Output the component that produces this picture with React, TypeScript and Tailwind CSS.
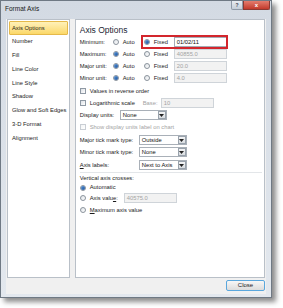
function Radio({ on }: { on?: boolean }) {
  return (
    <span className="flex h-[6px] w-[6px] shrink-0 items-center justify-center rounded-full border border-[#8a939c] bg-gradient-to-br from-[#dfe3e8] to-white">
      {on && <span className="h-[4px] w-[4px] rounded-full bg-gradient-to-br from-[#5b95d6] to-[#17509a]" />}
    </span>
  );
}

function Check({ off }: { off?: boolean }) {
  return (
    <span
      className={`h-[6px] w-[6px] shrink-0 border bg-gradient-to-br to-white ${
        off ? "border-[#c9ced4] from-[#f3f4f5]" : "border-[#8f99a4] from-[#dde1e6]"
      }`}
    />
  );
}

function Box({ value, className, on }: { value: string; className: string; on?: boolean }) {
  return (
    <span
      className={`flex h-[10px] items-center border pl-[2px] ${
        on ? "border-[#a5acb5] bg-white text-[#111]" : "border-[#cfd4d9] bg-[#f2f2f2] text-[#a3a3a3]"
      } ${className}`}
    >
      {value}
    </span>
  );
}

function Select({ value, className }: { value: string; className: string }) {
  return (
    <span className={`flex h-[10px] items-center border border-[#a9b0b8] bg-white ${className}`}>
      <span className="flex-1 pl-[2px] text-[#111]">{value}</span>
      <span className="flex h-[8px] w-[8px] items-center justify-center border border-[#9aa3ad] bg-gradient-to-b from-[#f4f5f6] to-[#d9dde1]">
        <svg width="5" height="3" viewBox="0 0 5 3">
          <polygon points="0,0 5,0 2.5,3" fill="#222" />
        </svg>
      </span>
    </span>
  );
}

const sideItems = [
  "Axis Options",
  "Number",
  "Fill",
  "Line Color",
  "Line Style",
  "Shadow",
  "Glow and Soft Edges",
  "3-D Format",
  "Alignment",
];

const unitRows = [
  { label: "Minimum:", auto: false, value: "01/02/11" },
  { label: "Maximum:", auto: true, value: "40855.0" },
  { label: "Major unit:", auto: true, value: "20.0" },
  { label: "Minor unit:", auto: true, value: "4.0" },
];

export default function App() {
  return (
    <div className="h-[308px] w-[283px] bg-white font-['Liberation_Sans',Arial,sans-serif] text-[5.8px] text-[#1b1b1b]">
      <div className="flex h-[298px] w-[272px] flex-col border border-[#6f7984] bg-gradient-to-b from-[#d3dae3] to-[#e3e8ee] shadow-[4px_4px_5px_rgba(0,0,0,0.45)]">
        {/* Title bar */}
        <div className="flex h-[18px] items-start">
          <span className="mt-[2px] flex-1 pl-[4px] text-[6.5px] leading-[12px] text-[#1a1a1a]">Format Axis</span>
          <span className="flex h-[9px] w-[12px] items-center justify-center rounded-bl-[2px] border border-t-0 border-[#8e99a6] bg-gradient-to-b from-[#e8edf2] to-[#c5ced8] text-[5px] font-bold leading-none text-[#3b4450]">
            ?
          </span>
          <span className="mr-[1px] flex h-[9px] w-[27px] items-center justify-center rounded-br-[2px] border border-t-0 border-[#8a3a33] bg-gradient-to-b from-[#e47c6e] to-[#c2392b] text-[6px] font-bold leading-none text-white">
            x
          </span>
        </div>

        {/* Client area */}
        <div className="mx-[5px] flex flex-1 flex-col bg-[#f0f0f0] px-[1px]">
          <div className="flex h-[259px] gap-[5px]">
            {/* Left list */}
            <div className="w-[63px] border border-[#b9c0c8] bg-white px-[1px] pt-[1px]">
              {sideItems.map((s, i) => (
                <div
                  key={s}
                  className={`flex h-[13.75px] items-center pl-[2px] ${
                    i === 0
                      ? "rounded-[1px] border border-[#e5b94a] bg-gradient-to-b from-[#fff1b8] to-[#fbd867]"
                      : "border border-transparent"
                  }`}
                >
                  {s}
                </div>
              ))}
            </div>

            {/* Right options */}
            <div className="flex w-[191px] flex-col border border-[#b9c0c8] bg-white pl-[4px] pr-[2px] pt-[4px]">
              <div className="h-[12px] text-[8.5px] leading-[12px] text-[#1d2736]">Axis Options</div>

              {unitRows.map((r) => (
                <div key={r.label} className="flex h-[12px] items-center">
                  <span className="w-[33px]">{r.label}</span>
                  <Radio on={r.auto} />
                  <span className="ml-[4px] w-[21px]">Auto</span>
                  <span className="relative flex items-center">
                    <Radio on={!r.auto} />
                    <span className="ml-[4px] w-[20px]">Fixed</span>
                    <Box value={r.value} on={!r.auto} className="w-[53px]" />
                    {!r.auto && (
                      <span className="absolute -left-[3px] -top-[2px] h-[14px] w-[87px] border-2 border-[#d3262d]" />
                    )}
                  </span>
                </div>
              ))}

              <div className="mt-[1px] flex h-[12px] items-center">
                <Check />
                <span className="ml-[4px]">Values in reverse order</span>
              </div>
              <div className="flex h-[12px] items-center">
                <Check />
                <span className="ml-[4px] w-[53px]">Logarithmic scale</span>
                <span className="w-[18px] text-[#a3a3a3]">Base:</span>
                <Box value="10" className="w-[53px]" />
              </div>
              <div className="flex h-[12px] items-center">
                <span className="w-[40px]">Display units:</span>
                <Select value="None" className="w-[47px]" />
              </div>
              <div className="flex h-[12px] items-center text-[#a3a3a3]">
                <Check off />
                <span className="ml-[4px]">Show display units label on chart</span>
              </div>

              <div className="mt-[1px] flex h-[12px] items-center">
                <span className="w-[59px]">Major tick mark type:</span>
                <Select value="Outside" className="w-[48px]" />
              </div>
              <div className="flex h-[12px] items-center">
                <span className="w-[59px]">Minor tick mark type:</span>
                <Select value="None" className="w-[48px]" />
              </div>
              <div className="mt-[1px] flex h-[12px] items-center">
                <span className="w-[59px]">
                  <span className="underline">A</span>xis labels:
                </span>
                <Select value="Next to Axis" className="w-[48px]" />
              </div>

              <div className="mt-[1px] h-px bg-[#e3e6e9]" />

              <div className="flex h-[10px] items-center">Vertical axis crosses:</div>
              <div className="flex h-[9px] items-center">
                <Radio on />
                <span className="ml-[4px]">Automatic</span>
              </div>
              <div className="flex h-[12px] items-center">
                <Radio />
                <span className="ml-[4px] w-[34px]">
                  Axis valu<span className="underline">e</span>:
                </span>
                <Box value="40575.0" className="w-[53px]" />
              </div>
              <div className="flex h-[12px] items-center">
                <Radio />
                <span className="ml-[4px]">
                  <span className="underline">M</span>aximum axis value
                </span>
              </div>
            </div>
          </div>

          {/* Footer */}
          <div className="flex h-[16px] items-start justify-end">
            <span className="mt-[2px] flex h-[11px] w-[39px] items-center justify-center rounded-[2px] border border-[#5aa7dd] bg-gradient-to-b from-[#f7f7f7] to-[#dcdcdc] text-[6px]">
              Close
            </span>
          </div>
        </div>
        <div className="h-[3px]" />
      </div>
    </div>
  );
}
